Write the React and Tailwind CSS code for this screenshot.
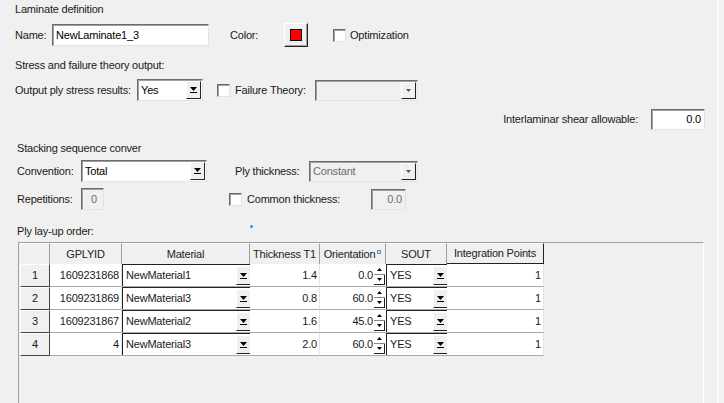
import React from "react"

const font = { fontFamily: '"Liberation Sans", Arial, sans-serif' }

function Arrow({ small = false, up = false, color = "#000" }) {
  const w = small ? 5 : 7
  const h = small ? 3 : 4
  return (
    <svg width={w} height={h} viewBox={`0 0 ${w} ${h}`} className="block">
      {up ? (
        <polygon points={`0,${h} ${w},${h} ${w / 2},0`} fill={color} />
      ) : (
        <polygon points={`0,0 ${w},0 ${w / 2},${h}`} fill={color} />
      )}
    </svg>
  )
}

function DropBtn({ disabled = false }) {
  return (
    <div className="flex h-full w-[15px] shrink-0 flex-col items-center justify-center border-l border-t border-l-white border-t-white border-r border-b border-r-[#222] border-b-[#222] bg-[#f0f0f0]">
      <Arrow small={disabled} color={disabled ? "#555" : "#000"} />
      {!disabled && <div className="mt-[1px] h-[1px] w-[7px] bg-black" />}
    </div>
  )
}

function Sunken({ className = "", children, disabled = false }) {
  return (
    <div
      className={`flex items-center border border-t-[#6b6b6b] border-l-[#6b6b6b] border-r-[#e3e3e3] border-b-[#e3e3e3] shadow-[inset_1px_1px_0_#a0a0a0] ${
        disabled ? "bg-[#f0f0f0] text-[#6d6d6d]" : "bg-white text-black"
      } ${className}`}
    >
      {children}
    </div>
  )
}

function Select({ value, className = "", disabled = false }) {
  return (
    <Sunken className={`${className} p-[1px] pl-[3px]`} disabled={disabled}>
      <span className="flex-1 truncate">{value}</span>
      <DropBtn disabled={disabled} />
    </Sunken>
  )
}

function Check() {
  return (
    <div className="h-[13px] w-[13px] shrink-0 border border-t-[#6b6b6b] border-l-[#6b6b6b] border-r-[#e3e3e3] border-b-[#e3e3e3] bg-white shadow-[inset_1px_1px_0_#a0a0a0]" />
  )
}

const cols = "grid grid-cols-[30px_72px_128px_70px_66px_61px_97px]"

const rows = [
  { n: 1, id: "1609231868", mat: "NewMaterial1", t: "1.4", o: "0.0" },
  { n: 2, id: "1609231869", mat: "NewMaterial3", t: "0.8", o: "60.0" },
  { n: 3, id: "1609231867", mat: "NewMaterial2", t: "1.6", o: "45.0" },
  { n: 4, id: "4", mat: "NewMaterial3", t: "2.0", o: "60.0" },
]

function Head({ children, last = false }) {
  return (
    <div
      className={`flex h-[21px] items-center justify-center border-t border-t-white border-r ${
        last ? "border-r-[#222] border-b border-b-[#222]" : "border-r-[#a0a0a0]"
      } bg-[#f0f0f0] text-[#222]`}
    >
      {children}
    </div>
  )
}

function Cell({ children, className = "" }) {
  return (
    <div className={`flex h-[23px] items-center justify-end border-b border-b-[#a9a9a9] border-r border-r-[#e3e3e3] bg-white pr-[2px] ${className}`}>
      {children}
    </div>
  )
}

function ComboCell({ value }) {
  return (
    <div className="flex h-[23px] items-center border-b border-b-[#a9a9a9] bg-white">
      <div className="flex h-full flex-1 items-center border-l border-t border-l-[#222] border-t-[#222] pl-[3px] pr-[1px] py-[1px]">
        <span className="flex-1">{value}</span>
        <div className="h-full w-[13px]">
          <DropBtn />
        </div>
      </div>
    </div>
  )
}

function SpinCell({ value }) {
  return (
    <div className="flex h-[23px] items-center justify-end border-b border-b-[#a9a9a9] bg-white pr-[1px]">
      <span className="mr-[1px]">{value}</span>
      <div className="flex h-[19px] w-[11px] flex-col">
        <div className="flex flex-1 items-center justify-center border-b border-b-[#888]">
          <Arrow small up />
        </div>
        <div className="flex flex-1 items-center justify-center border-r border-b border-r-[#222] border-b-[#222]">
          <Arrow small />
        </div>
      </div>
    </div>
  )
}

export default function App() {
  return (
    <div style={font} className="relative flex h-[403px] w-[724px] overflow-hidden bg-[#f0f0f0] text-[11px] leading-none tracking-[-0.2px] text-[#1a1a1a]">
      <div className="flex w-[717px] flex-col">
        <div className="flex h-[19px] items-center pl-[15px]">Laminate definition</div>

        <div className="mt-[5px] flex h-[22px] items-center pl-[15px]">
          <span className="w-[37px]">Name:</span>
          <Sunken className="h-[22px] w-[157px] pl-[3px]">NewLaminate1_3</Sunken>
          <span className="ml-[21px] w-[54px]">Color:</span>
          <div className="flex h-[24px] w-[24px] items-center justify-center border border-t-white border-l-white border-r-[#222] border-b-[#222] bg-[#f0f0f0] shadow-[inset_-1px_-1px_0_#a0a0a0]">
            <div className="h-[12px] w-[12px] border border-black bg-[#ff0000]" />
          </div>
          <div className="ml-[25px]">
            <Check />
          </div>
          <span className="ml-[4px]">Optimization</span>
        </div>

        <div className="mt-[10px] flex h-[18px] items-center pl-[15px]">Stress and failure theory output:</div>

        <div className="mt-[5px] flex h-[22px] items-center pl-[15px]">
          <span className="w-[122px]">Output ply stress results:</span>
          <Select value="Yes" className="h-[22px] w-[66px]" />
          <div className="ml-[14px]">
            <Check />
          </div>
          <span className="ml-[5px] w-[80px]">Failure Theory:</span>
          <Select value="" disabled className="h-[21px] w-[103px]" />
        </div>

        <div className="mt-[8px] flex h-[21px] items-center justify-end pr-[12px]">
          <span>Interlaminar shear allowable:</span>
          <Sunken className="ml-[13px] h-[21px] w-[54px] justify-end pr-[3px]">0.0</Sunken>
        </div>

        <div className="mt-[9px] flex h-[18px] items-center pl-[17px]">Stacking sequence conver</div>

        <div className="mt-[3px] flex h-[22px] items-center pl-[17px]">
          <span className="w-[64px]">Convention:</span>
          <Select value="Total" className="h-[22px] w-[126px]" />
          <span className="ml-[28px] w-[74px]">Ply thickness:</span>
          <Select value="Constant" disabled className="h-[21px] w-[109px]" />
        </div>

        <div className="mt-[6px] flex h-[22px] items-center pl-[17px]">
          <span className="w-[64px]">Repetitions:</span>
          <Sunken disabled className="h-[22px] w-[23px] justify-end pr-[6px]">0</Sunken>
          <div className="ml-[125px]">
            <Check />
          </div>
          <span className="ml-[5px] w-[124px]">Common thickness:</span>
          <Sunken disabled className="h-[21px] w-[35px] justify-end pr-[3px]">0.0</Sunken>
        </div>

        <div className="mt-[12px] flex h-[18px] items-center pl-[17px]">Ply lay-up order:</div>

        <div className="ml-[18px] mt-[2px] w-[686px] flex-1 border-l border-t border-r border-l-[#a0a0a0] border-t-[#a0a0a0] border-r-white pl-[1px]">
          <div className={cols}>
            <Head />
            <Head>GPLYID</Head>
            <Head>Material</Head>
            <Head>Thickness T1</Head>
            <Head>
              Orientation
              <span className="ml-[2px] mb-[4px] inline-block h-[4px] w-[4px] border border-[#5a8fd0] bg-[#f7e08a]" />
            </Head>
            <Head>SOUT</Head>
            <Head last>Integration Points</Head>
            {rows.map((r) => (
              <React.Fragment key={r.n}>
                <div className="flex h-[23px] items-center justify-center border border-t-white border-l-white border-r-[#444] border-b-[#444] bg-[#f0f0f0]">
                  {r.n}
                </div>
                <Cell className="pr-[1px]">{r.id}</Cell>
                <ComboCell value={r.mat} />
                <Cell>{r.t}</Cell>
                <SpinCell value={r.o} />
                <ComboCell value="YES" />
                <Cell>1</Cell>
              </React.Fragment>
            ))}
          </div>
        </div>
      </div>
      <div className="flex-1 border-l border-l-white bg-[#f3f3f3]" />
      <div className="absolute left-[250px] top-[225px] h-[3px] w-[3px] rounded-full bg-[#1c9bd8]" />
    </div>
  )
}
